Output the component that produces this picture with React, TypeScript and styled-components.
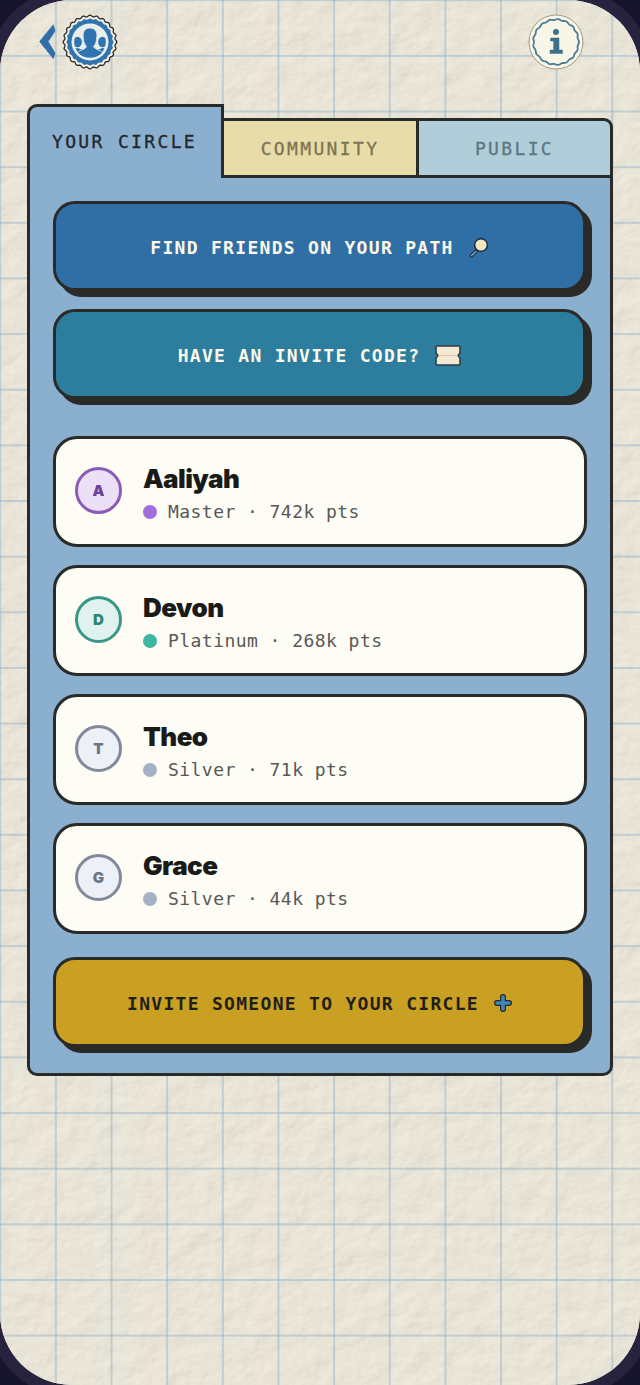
import React from 'react';
import styled, { createGlobalStyle } from 'styled-components';

const GlobalStyle = createGlobalStyle`
  html, body {
    margin: 0;
    padding: 0;
    background: #16132c;
  }
  * {
    box-sizing: border-box;
  }
`;

const MONO = `"DejaVu Sans Mono", "Liberation Mono", monospace`;
const INK = '#2a2a28';

const Page = styled.div`
  position: relative;
  width: 640px;
  height: 1385px;
  overflow: hidden;
  border-radius: 72px;
  background-color: #ebe6d8;
  box-shadow: 0 0 0 12px #27233f;
  padding: 14px 27px 0;
`;

const Paper = styled.svg`
  position: absolute;
  inset: 0;
  width: 100%;
  height: 100%;
`;

const GridLines = styled.div`
  position: absolute;
  inset: 0;
  background-image:
    linear-gradient(to right, rgba(130, 170, 198, 0.4) 1.5px, transparent 1.5px),
    linear-gradient(to bottom, rgba(130, 170, 198, 0.4) 1.5px, transparent 1.5px);
  background-size: 55.65px 55.65px;
  background-position: -0.75px -0.75px;
`;

const Content = styled.div`
  position: relative;
`;

const Header = styled.header`
  display: flex;
  align-items: center;
  justify-content: space-between;
  height: 56px;
  margin: 0 29px 34px 11px;
`;

const HeaderLeft = styled.div`
  display: flex;
  align-items: center;
  gap: 6px;
`;

const Panel = styled.section`
  display: flex;
  flex-direction: column;
`;

const TabRow = styled.div`
  display: flex;
  align-items: flex-end;
  height: 74px;
`;

const Tab = styled.div<{ $bg: string; $color: string; $width: number }>`
  display: flex;
  align-items: center;
  justify-content: center;
  width: ${(p) => p.$width}px;
  height: 60px;
  background: ${(p) => p.$bg};
  color: ${(p) => p.$color};
  border: 3px solid ${INK};
  border-left: 0;
  font-family: ${MONO};
  font-size: 18px;
  letter-spacing: 2.35px;
  -webkit-text-stroke: 0.3px ${(p) => p.$color};

  &:last-child {
    border-top-right-radius: 9px;
  }
`;

const ActiveTab = styled.div`
  width: 197px;
  height: 74px;
  padding: 24px 0 0 22px;
  background: #8bafcf;
  color: #22262b;
  border: 3.5px solid ${INK};
  border-bottom: 0;
  border-top-left-radius: 10px;
  font-family: ${MONO};
  font-size: 18px;
  letter-spacing: 2.35px;
  -webkit-text-stroke: 0.3px #22262b;
  white-space: nowrap;
`;

const PanelBody = styled.div`
  display: flex;
  flex-direction: column;
  height: 898px;
  padding: 23px 23px 0;
  background: #8bafcf;
  border: 3.5px solid ${INK};
  border-top: 0;
  border-radius: 0 0 10px 10px;
`;

const ActionButton = styled.div<{ $bg: string; $color: string }>`
  display: flex;
  align-items: center;
  justify-content: center;
  gap: 15px;
  flex: none;
  width: 533px;
  height: 90px;
  padding-top: 2px;
  margin-bottom: 18px;
  background: ${(p) => p.$bg};
  color: ${(p) => p.$color};
  border: 3.5px solid ${INK};
  border-radius: 22px;
  box-shadow: 6px 6px 0 ${INK};
  font-family: ${MONO};
  font-weight: 700;
  font-size: 18px;
  letter-spacing: 1.3px;
  white-space: pre;
`;

const CardList = styled.div`
  display: flex;
  flex-direction: column;
  gap: 18px;
  margin: 19px 0 23px;
`;

const Card = styled.article`
  display: flex;
  align-items: center;
  gap: 21px;
  height: 111px;
  width: 534px;
  padding: 0 19px;
  background: #fdfcf5;
  border: 3px solid ${INK};
  border-radius: 24px;
`;

const Avatar = styled.div<{ $bg: string; $border: string; $color: string }>`
  display: flex;
  align-items: center;
  justify-content: center;
  flex: none;
  width: 47px;
  height: 47px;
  margin-top: -2px;
  border-radius: 50%;
  background: ${(p) => p.$bg};
  border: 3px solid ${(p) => p.$border};
  color: ${(p) => p.$color};
  font-family: "Inter", sans-serif;
  font-weight: 900;
  font-size: 15px;
`;

const CardText = styled.div`
  display: flex;
  flex-direction: column;
  gap: 6px;
  padding-top: 2px;
`;

const Name = styled.div`
  font-family: "Inter", sans-serif;
  font-weight: 900;
  font-size: 26px;
  line-height: 32px;
  letter-spacing: -0.55px;
  color: #1a1a18;
`;

const Meta = styled.div`
  display: flex;
  align-items: center;
  gap: 11px;
  font-family: ${MONO};
  font-size: 18px;
  line-height: 22px;
  letter-spacing: 0.45px;
  color: #585858;
`;

const Dot = styled.span<{ $color: string }>`
  width: 14px;
  height: 14px;
  border-radius: 50%;
  background: ${(p) => p.$color};
`;

function badgePath(cx: number, cy: number, r: number, amp: number, waves: number) {
  const pts: string[] = [];
  for (let i = 0; i <= 240; i++) {
    const a = (i / 240) * Math.PI * 2;
    const rr = r + amp * Math.cos(a * waves);
    pts.push(`${(cx + rr * Math.cos(a)).toFixed(2)} ${(cy + rr * Math.sin(a)).toFixed(2)}`);
  }
  return `M${pts.join('L')}Z`;
}

const BackIcon = () => (
  <svg width="18" height="36" viewBox="0 0 18 36">
    <path d="M15.3 0.8 L17 7 L10 17.5 L17 29 L15.3 34.5 L1.7 17.5 Z" fill="#2f6fa8" stroke="#2f6fa8" strokeWidth="0.8" strokeLinejoin="round" />
  </svg>
);

const CircleBadge = () => (
  <svg width="56" height="56" viewBox="0 0 56 56">
    <path d={badgePath(28, 28, 26, 0.8, 24)} fill="#f4f0e2" stroke="#2a2a28" strokeWidth="1.3" />
    <path d={badgePath(28, 28, 23, 0.5, 24)} fill="#2f74b0" />
    <circle cx="28" cy="28" r="18.5" fill="#e9eee9" />
    <clipPath id="badge-clip">
      <circle cx="28" cy="28" r="15.8" />
    </clipPath>
    <g clipPath="url(#badge-clip)" fill="#2f74b0">
      <ellipse cx="15.5" cy="28" rx="4.4" ry="5.2" />
      <path d="M8 46 V39 Q9 35 15.5 34 L21 36 V46 Z" />
      <ellipse cx="40.5" cy="28" rx="4.4" ry="5.2" />
      <path d="M48 46 V39 Q47 35 40.5 34 L35 36 V46 Z" />
    </g>
    <g fill="#2f74b0" stroke="#e9eee9" strokeWidth="0.8" clipPath="url(#badge-clip)">
      <path d="M12 46 Q12 38 22 35 L24.5 33 Q21 29 21 21 Q21.5 14 28 14 Q34.5 14 35 21 Q35 29 31.5 33 L34 35 Q44 38 44 46 Z" />
    </g>
  </svg>
);

const InfoBadge = () => (
  <svg width="56" height="56" viewBox="0 0 56 56">
    <circle cx="28" cy="28" r="27" fill="#f8f5e9" stroke="#a39a7c" strokeWidth="1" />
    <path d={badgePath(28, 28, 22.5, 0.5, 17)} fill="none" stroke="#4a7d93" strokeWidth="1.8" />
    <circle cx="28" cy="18" r="3" fill="#3f7089" />
    <path d="M22.5 24 H31 V36 H34.5 V39.5 H22 V36 H25.6 V27 H22.5 Z" fill="#3f7089" stroke="#3f7089" strokeWidth="0.5" strokeLinejoin="round" />
  </svg>
);

const SearchIcon = () => (
  <svg width="20" height="21" viewBox="0 0 20 21">
    <path d="M6.8 12.8 L1.6 17.8 A1.2 1.2 0 0 0 3.4 19.5 L8.6 14.4 Z" fill="#8fb6d3" stroke="#1f3345" strokeWidth="1.2" strokeLinejoin="round" />
    <circle cx="12" cy="8" r="6.4" fill="#f3e6c2" stroke="#1f3345" strokeWidth="1.6" />
  </svg>
);

const TicketIcon = () => (
  <svg width="26" height="21" viewBox="0 0 26 21">
    <path d="M2 1 H24 A1 1 0 0 1 25 2 V8 L23 10.5 L25 13 V19 A1 1 0 0 1 24 20 H2 A1 1 0 0 1 1 19 V13 L3 10.5 L1 8 V2 A1 1 0 0 1 2 1 Z" fill="#f3e9d2" stroke="#2c3d48" strokeWidth="1.6" strokeLinejoin="round" />
    <path d="M3.5 10.5 H22.5" stroke="#d8cdb4" strokeWidth="1" />
  </svg>
);

const PlusIcon = () => (
  <svg width="18" height="18" viewBox="0 0 18 18">
    <path d="M9 3V15M3 9H15" fill="none" stroke="#23292c" strokeWidth="6" strokeLinecap="round" />
    <path d="M9 3V15M3 9H15" fill="none" stroke="#3f86b8" strokeWidth="3.6" strokeLinecap="round" />
  </svg>
);

type Friend = {
  name: string;
  meta: string;
  dot: string;
  avatarBg: string;
  avatarBorder: string;
  avatarColor: string;
};

const friends: Friend[] = [
  { name: 'Aaliyah', meta: 'Master · 742k pts', dot: '#a06fdb', avatarBg: '#ece0f7', avatarBorder: '#8a5cb8', avatarColor: '#6b42a0' },
  { name: 'Devon', meta: 'Platinum · 268k pts', dot: '#3fb5a3', avatarBg: '#dff2ee', avatarBorder: '#3a9686', avatarColor: '#2b8474' },
  { name: 'Theo', meta: 'Silver · 71k pts', dot: '#a3b1c4', avatarBg: '#edf0f6', avatarBorder: '#808a9b', avatarColor: '#6c7686' },
  { name: 'Grace', meta: 'Silver · 44k pts', dot: '#a3b1c4', avatarBg: '#edf0f6', avatarBorder: '#808a9b', avatarColor: '#6c7686' },
];

const App = () => {
  return (
    <>
      <GlobalStyle />
      <Page>
        <Paper>
          <filter id="paper-grain" x="0" y="0" width="100%" height="100%">
            <feTurbulence type="fractalNoise" baseFrequency="0.04 0.05" numOctaves="5" seed="7" result="noise" />
            <feDiffuseLighting in="noise" lightingColor="#e9e5d8" surfaceScale="1" diffuseConstant="1.12">
              <feDistantLight azimuth="45" elevation="62" />
            </feDiffuseLighting>
          </filter>
          <rect width="100%" height="100%" filter="url(#paper-grain)" />
        </Paper>
        <GridLines />
        <Content>
          <Header>
            <HeaderLeft>
              <BackIcon />
              <CircleBadge />
            </HeaderLeft>
            <InfoBadge />
          </Header>
          <Panel>
            <TabRow>
              <ActiveTab>YOUR CIRCLE</ActiveTab>
              <Tab $bg="#e8dca8" $color="#7d7452" $width={195}>COMMUNITY</Tab>
              <Tab $bg="#b0ced9" $color="#5d7684" $width={194}>PUBLIC</Tab>
            </TabRow>
            <PanelBody>
              <ActionButton $bg="#2f6fa5" $color="#fdf8e8">
                FIND FRIENDS ON YOUR PATH
                <SearchIcon />
              </ActionButton>
              <ActionButton $bg="#2c7d9e" $color="#fdf8e8">
                HAVE AN INVITE CODE?
                <TicketIcon />
              </ActionButton>
              <CardList>
                {friends.map((f) => (
                  <Card key={f.name}>
                    <Avatar $bg={f.avatarBg} $border={f.avatarBorder} $color={f.avatarColor}>
                      {f.name[0]}
                    </Avatar>
                    <CardText>
                      <Name>{f.name}</Name>
                      <Meta>
                        <Dot $color={f.dot} />
                        {f.meta}
                      </Meta>
                    </CardText>
                  </Card>
                ))}
              </CardList>
              <ActionButton $bg="#c9a021" $color="#1f1f1d">
                INVITE SOMEONE TO YOUR CIRCLE
                <PlusIcon />
              </ActionButton>
            </PanelBody>
          </Panel>
        </Content>
      </Page>
    </>
  );
};

export default App;
